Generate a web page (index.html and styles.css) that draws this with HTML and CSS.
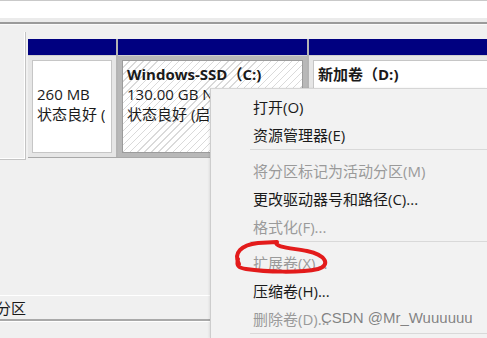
FILE: index.html
```html
<!DOCTYPE html>
<html lang="zh-CN">
<head>
    <meta charset="UTF-8">
    <title>磁盘管理</title>
    <link rel="stylesheet" href="styles.css">
</head>
<body>
    <div class="window">
        <div class="toolbar"></div>
        <div class="disk-area">
            <div class="disk-label"></div>
            <div class="partitions">
                <div class="part part-efi">
                    <div class="part-head"></div>
                    <div class="part-body">
                        <div class="part-box">
                            <div class="line">&nbsp;</div>
                            <div class="line">260 MB</div>
                            <div class="line">状态良好 (EFI 系统分区)</div>
                        </div>
                    </div>
                </div>
                <div class="part part-sys">
                    <div class="part-head"></div>
                    <div class="part-body">
                        <div class="part-box hatched">
                            <div class="line title">Windows-SSD（C:)</div>
                            <div class="line">130.00 GB NTFS</div>
                            <div class="line">状态良好 (启动, 页面文件, 故障转储, 基本数据分区)</div>
                        </div>
                    </div>
                </div>
                <div class="part part-data">
                    <div class="part-head"></div>
                    <div class="part-body">
                        <div class="part-box">
                            <div class="line title">新加卷（D:)</div>
                            <div class="line">346.93 GB NTFS</div>
                            <div class="line">状态良好 (基本数据分区)</div>
                        </div>
                    </div>
                </div>
            </div>
        </div>
        <div class="spacer"></div>
        <div class="legend"><span>分区</span></div>
    </div>

    <div class="menu">
        <div class="item">打开(O)</div>
        <div class="item">资源管理器(E)</div>
        <div class="sep"></div>
        <div class="item disabled">将分区标记为活动分区(M)</div>
        <div class="item">更改驱动器号和路径(C)...</div>
        <div class="item disabled">格式化(F)...</div>
        <div class="sep"></div>
        <div class="item disabled">扩展卷(X)...</div>
        <div class="item">压缩卷(H)...</div>
        <div class="item disabled">删除卷(D)...</div>
        <div class="sep"></div>
    </div>

    <!-- hand-drawn red circle around 扩展卷 -->
    <svg class="mark" width="487" height="338" viewBox="0 0 487 338">
        <path d="M 239 264 C 233 253, 241 245, 258 243 L 277 242 C 273 247, 291 248, 307 251 C 326 255, 331 265, 318 269 C 300 273, 266 272, 246 269 C 239 268, 236 266, 238 259"
              fill="none" stroke="#e31b1b" stroke-width="4" stroke-linecap="round" stroke-linejoin="round"/>
    </svg>

    <div class="watermark">CSDN @Mr_Wuuuuuu</div>
</body>
</html>
```

FILE: styles.css
```css
body {
    margin: 0;
    width: 487px;
    height: 338px;
    overflow: hidden;
    position: relative;
    background-color: #f0f0f0;
    font-family: "Open Sans", "Noto Sans CJK SC", "Microsoft YaHei", sans-serif;
    font-size: 15px;
    color: #1a1a1a;
}
.window {
    display: flex;
    flex-direction: column;
}
.toolbar {
    height: 17px;
    background-color: white;
    border-top: 1px solid #c9c9c9;
    border-bottom: 4px solid #ebebeb;
    box-shadow: 0 2px 0 #9a9a9a, 0 3px 0 #fafafa;
}
.disk-area {
    display: flex;
    margin-top: 10px;
    height: 128px;
}
.disk-label {
    width: 25px;
    height: 127px;
    flex-shrink: 0;
    background-color: #f0f0f0;
    border-right: 1px solid #c4c4c4;
    border-bottom: 1px solid #c4c4c4;
    box-shadow: inset -1px -1px 0 #fff;
}
.partitions {
    display: flex;
    gap: 2px;
    margin-top: 7px;
    margin-left: 2px;
    height: 118px;
    background-color: #b4b4b4;
    flex: 1;
    border-bottom: 1px solid #a8a8a8;
}
.part {
    display: flex;
    flex-direction: column;
    flex-shrink: 0;
    overflow: hidden;
}
.part-efi {
    width: 88px;
}
.part-sys {
    width: 189px;
}
.part-data {
    flex: 1;
}
.part-head {
    height: 16px;
    background-color: #000080;
    border-bottom: 1px solid #cfcfcf;
}
.part-body {
    flex: 1;
    display: flex;
    padding: 4px;
    background-color: #e6e6e6;
}
.part-sys .part-body {
    background-color: #b8b8b8;
}
.part-box {
    flex: 1;
    min-width: 0;
    background-color: white;
    border: 1px solid #c6c6c6;
    padding: 3px 0 0 4px;
    white-space: nowrap;
    overflow: hidden;
}
.hatched {
    background: repeating-linear-gradient(135deg, #ffffff 0 4px, #dadada 4px 5px);
    border-color: #9c9c9c;
}
.line {
    line-height: 20px;
    height: 20px;
    margin-right: 6px;
    overflow: hidden;
}
.title {
    font-weight: bold;
}
.spacer {
    height: 135px;
}
.legend {
    width: 210px;
    height: 23px;
    border-top: 1px solid #ffffff;
    border-bottom: 2px solid #a9a9a9;
    box-shadow: 0 1px 0 #ffffff;
    line-height: 24px;
    overflow: hidden;
}
.legend span {
    margin-left: -4px;
}
.menu {
    position: absolute;
    left: 210px;
    top: 88px;
    right: 0;
    bottom: 0;
    padding-top: 4px;
    background-color: #f2f2f2;
    border-left: 1px solid #cdcdcd;
    border-top: 1px solid #d6d6d6;
    box-shadow: -1px 0 2px rgba(0,0,0,0.08);
}
.item {
    height: 28px;
    line-height: 28px;
    padding-left: 42px;
    white-space: nowrap;
}
.disabled {
    color: #9a9a9a;
}
.sep {
    height: 1px;
    margin: 0 0 7px 39px;
    background-color: #d9d9d9;
}
.mark {
    position: absolute;
    left: 0;
    top: 0;
}
.watermark {
    position: absolute;
    left: 321px;
    top: 308px;
    font-family: "Liberation Sans", Arial, sans-serif;
    font-size: 15px;
    line-height: 20px;
    color: rgba(110,110,110,0.85);
    white-space: nowrap;
}
```
